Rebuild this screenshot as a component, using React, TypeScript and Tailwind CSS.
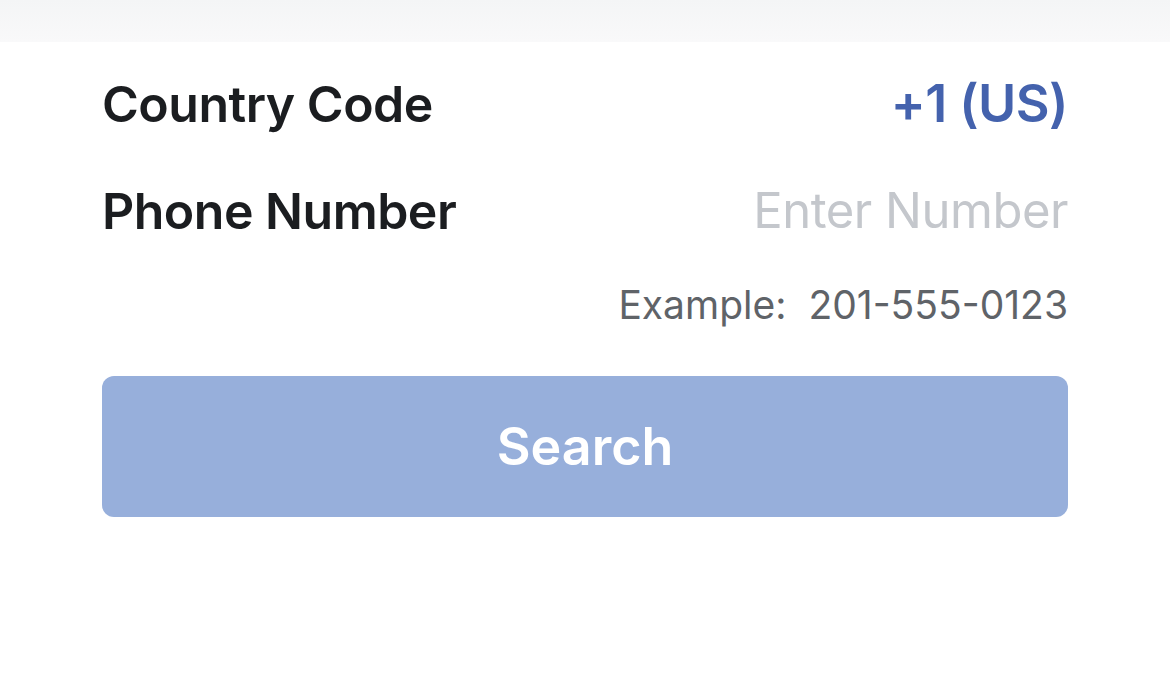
import { useState } from "react";

export default function App() {
  const [phone, setPhone] = useState("");

  return (
    <main className="min-h-[681px] bg-white font-['Inter','Noto_Sans',sans-serif]">
      {/* top bar fade */}
      <div className="h-[42px] bg-gradient-to-b from-[#f4f5f6] to-[#f9f9fa]" />

      <div className="px-[102px] pt-[30px]">
        <div className="flex items-center justify-between h-[64px]">
          <span className="text-[50px] font-semibold text-[#1b1d20] tracking-[-0.01em]">Country Code</span>
          <span className="text-[52px] font-semibold text-[#4462ad] tracking-[-0.01em]">+1 (US)</span>
        </div>

        <div className="flex items-center justify-between h-[64px] mt-[43px]">
          <span className="text-[50px] font-semibold text-[#1b1d20] tracking-[-0.01em]">Phone Number</span>
          <input
            value={phone}
            onChange={(e) => setPhone(e.target.value)}
            placeholder="Enter Number"
            className="w-[420px] text-right text-[49px] text-[#1b1d20] placeholder:text-[#c4c7cc] outline-none tracking-[-0.01em]"
          />
        </div>

        <p className="mt-[34px] text-right text-[39px] leading-[56px] text-[#5f6368]">
          Example:&nbsp; 201-555-0123
        </p>

        <button className="mt-[43px] w-full h-[141px] rounded-[12px] bg-[#97afdb] text-white text-[52px] font-semibold">
          Search
        </button>
      </div>
    </main>
  );
}
